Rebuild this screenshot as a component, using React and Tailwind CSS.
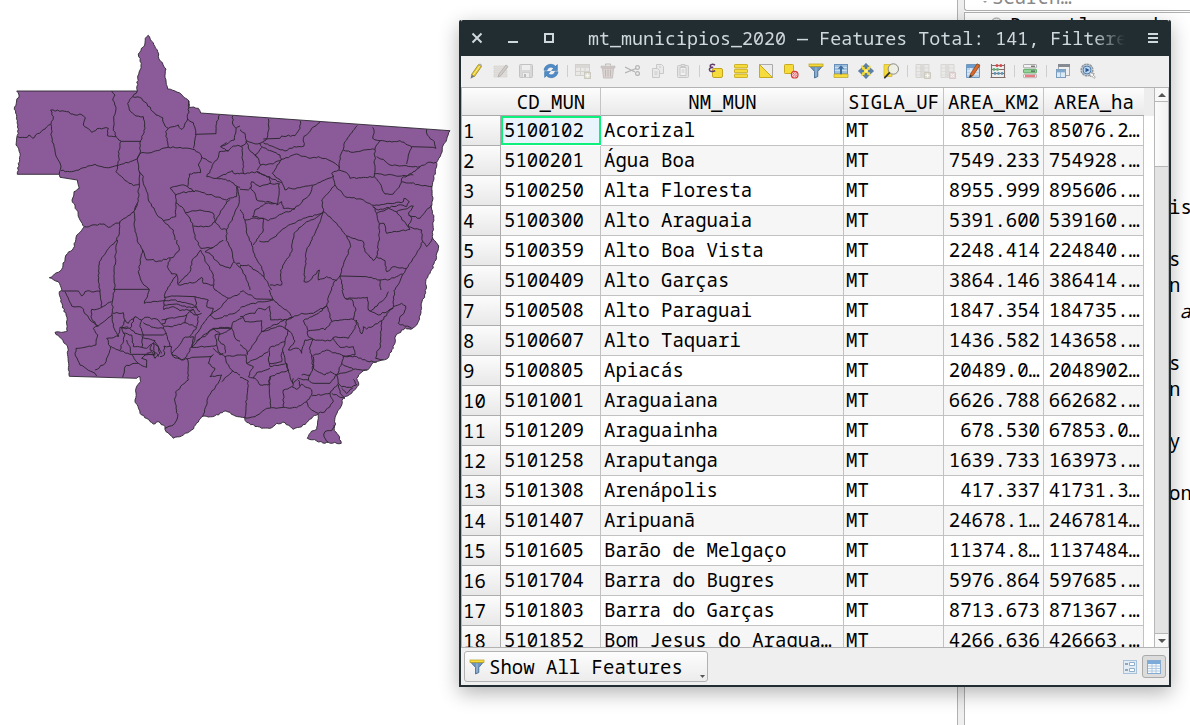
import React from "react";

const outline =
  "16.7,91 137.3,91 136.7,88.3 137.7,78.3 140,70 141.3,63.3 138.3,54 144.7,45 145.3,38.3 148.3,35.3 153.3,42.7 157.7,51.7 160.3,61 166,69 165,77.3 167.7,89 175,91 182.7,95.7 189,101 188.7,107.3 198.3,108.3 200.7,113 450,130.7 446.7,139.3 443.3,145 441,154 436.7,162.3 435.3,171.7 432,186.7 432.7,200 431.3,206.7 433.7,218.3 432.3,236.7 438.7,246 436,260 430,273.3 425.7,281.7 425.7,292.7 422,301.7 420.3,315 416.7,325 411,329.3 405,327.7 395.7,336 393.3,348.3 386.7,359 373.3,362.3 369.3,368.3 361.7,372.3 356.7,378.3 358.7,385 351.7,393.3 343.3,398.3 341.7,405 336,415 334.3,430.7 338.3,435 341.3,443.3 328.3,442.3 325,443.3 316.7,441 307.3,438.3 311.7,431 316.7,429.3 318,414 312.7,416.7 301.7,426.7 293.3,429.3 285,422.7 276.7,423.3 271.7,427.7 261.7,428.3 246.7,422.3 244.7,417.7 233.3,415 226,411 212.7,416.7 201.7,416.7 191.7,430 183.3,435 173.3,438.3 166,431.7 165,426.7 158.3,421.7 153.3,424 140,413.3 135,400 136,388.3 140.7,381.7 140,376.7 136.7,378.3 69.3,376.3 67.3,345.7 55,332.3 67.3,331 66,315 60.7,301.7 59.3,291.7 61.7,289.3 58.3,281.7 49.3,277.7 61.7,269.3 66,255 73.3,248.3 76,237.3 84.3,226.7 80,220 76.7,210 72,200 74,191.7 79.3,188.3 77.3,180 60,177.3 59.3,174.3 17.3,174.3 20,153.3 16,145 18.3,133.3 16.7,116.7 14.3,109.3 19,95 16.7,91";

// Inner boundaries, one sheet for each quarter of the state, three units to a pixel.
const sheets = [
  {
    id: "nw", x: 0, y: 20, clip: [0, 0, 720, 660],
    lines: [
      "335,213 345,225 338,240 348,262 341,290 340,325 348,350 363,363",
      "52,350 82,352 87,345 98,355 128,330 152,313",
      "152,270 160,290 153,313 155,350 162,380 170,412 183,440 178,463",
      "152,270 200,275 225,285 240,282 256,293 250,315 275,337 298,325 325,325 322,347 348,350",
      "363,364 422,364", "363,364 355,395 358,420 352,437",
      "183,452 215,455 285,433 320,443 352,437 410,418 420,400",
      "412,213 398,230 383,250 388,270 408,288 430,290 435,325 422,362 420,400 412,418 418,455 418,495 412,550 405,570",
      "398,230 425,235 468,285 488,293 495,318 505,325 497,335 505,382",
      "505,325 535,315 543,328 552,322 563,297 567,262 566,243", "563,297 580,308 587,340 580,385",
      "585,343 648,341 650,310 658,285",
      "420,400 460,395 505,382 540,382 578,388 600,400 605,412 635,428",
      "698,287 698,312 708,325 703,360 662,380 685,393 658,395 655,412 640,430",
      "708,325 720,318", "685,393 700,378 720,378", "662,380 680,368",
      "640,430 635,445 620,470 650,475 690,482 710,498 720,502",
      "650,475 697,452 705,462 720,462", "605,412 595,435 602,458 568,462 563,500",
      "352,437 348,455 370,475 400,497 418,492",
      "418,455 430,470 430,490 443,520 445,540 475,590 490,602 520,630 525,660",
      "510,505 545,495 563,500 585,515 545,518 527,525 510,505",
      "585,512 640,527 680,540 710,530 710,500", "527,525 527,590 490,602",
      "527,548 545,560 557,580 578,610 588,660", "557,578 600,570 640,580 645,605 625,620 580,618",
      "645,605 660,580 680,545 690,538", "645,605 665,628 680,628",
      "710,500 718,530 718,545 705,575 697,600 680,628 680,660",
      "253,620 312,612 325,622 360,605 402,575 412,550", "360,605 358,635 350,660",
      "402,575 405,600 403,620 412,660",
    ],
  },
  {
    id: "ne", x: 220, y: 90, clip: [60, 0, 660, 600],
    lines: [
      "38,75 38,100 75,130 78,160 65,168", "45,112 40,140 0,170", "0,185 15,178 35,185 65,168",
      "65,168 68,210 70,250", "145,87 147,115 138,150 120,160 100,160 80,152",
      "130,147 180,145 185,138 225,137 240,115 241,93",
      "300,97 275,115 250,145 252,168 222,170 195,183 160,170 130,158",
      "78,155 92,185 115,205 122,225 112,240", "120,160 125,170 180,195 185,208 160,222 122,225",
      "125,172 105,195 112,203",
      "185,208 157,250 185,275 195,300 205,293 225,297 278,285",
      "185,208 230,192 270,205 295,200 330,212 358,230 357,240 335,250 340,258 280,285 270,312 225,355 190,355",
      "412,107 375,155 370,178 360,200 358,235", "370,180 400,187 430,180 465,178 470,165 480,152",
      "458,112 462,130 458,145 480,152 530,155 540,152 575,170 565,195 560,222",
      "575,170 640,172 648,175 643,155 622,135 620,118", "465,178 463,260",
      "470,200 490,208 510,225 600,230",
      "648,217 625,217 600,230 575,250 545,265 540,285 520,312 495,312 475,275 463,260 430,262 390,265 380,248 357,240",
      "463,252 500,255 545,258 580,255", "545,275 636,290",
      "340,258 345,285 375,320 430,330 455,345 470,345 550,335 552,325 568,335 560,350 535,345 475,360 458,350",
      "345,285 305,330 310,365 350,400 380,438 430,455 435,485 460,512 470,500 478,450 478,400 470,370 460,350",
      "470,370 505,355 530,365 560,405 570,418 530,425 500,430 492,400 478,402",
      "530,365 550,358 580,348 565,372 575,385 565,410 605,420", "565,375 600,385 634,345",
      "605,420 608,455 620,470 637,445", "608,455 590,490 560,535 525,600",
      "470,500 495,512 500,545 520,530 560,535", "380,438 392,470 375,510 360,558 340,580 335,600",
      "360,558 440,560 480,570 510,568 548,552", "480,570 483,600",
      "310,365 285,430 260,480 252,575 265,575 298,540 295,570 320,560 350,572",
      "360,558 370,600",
      "310,365 290,382 260,395 222,430 215,485 182,540 185,585 150,585",
      "310,368 250,385 200,410 145,455 118,453",
      "225,357 185,372 145,392 130,385 98,380 105,360 140,340 165,340",
      "0,270 45,290 50,300 45,320 0,328",
      "0,260 35,245 75,252 110,245 150,262 150,280 120,290 95,275 92,295 105,310 110,330 170,340",
      "110,245 185,278", "178,280 174,330 170,345 185,335 190,355", "50,295 85,300 92,290", "150,280 178,282",
      "45,320 55,345 75,390 95,385 130,385 130,420 100,465",
      "75,390 80,430 95,465 105,500 125,530 132,560 105,540 85,525 60,525 40,515",
      "55,340 40,350 20,430 40,490 40,515 22,535 0,520", "60,525 85,580 90,600", "132,560 155,600",
    ],
  },
  {
    id: "sw", x: 30, y: 220, clip: [0, 60, 630, 630],
    lines: [
      "270,0 262,60 258,90 253,160 255,200 248,240 247,290",
      "262,60 240,80 208,125 205,180 210,215 215,262 245,245",
      "95,213 145,213 155,228 165,215 205,213 210,215",
      "105,215 125,258 155,262 180,300 205,318 240,290 247,285", "215,262 200,268 185,268 183,290 200,318",
      "312,0 325,70 338,90 350,120 370,118 380,125 430,112 448,90 440,65 437,35 400,0",
      "338,90 325,155 338,190 358,210", "250,208 358,208", "358,210 343,250 402,242",
      "420,115 412,140 425,162 440,163 405,220 402,270",
      "440,163 445,195 500,185 515,172 520,190 550,195 555,210 595,235 660,210 690,240",
      "445,190 480,155 485,125 512,90 530,130 550,165 552,195",
      "490,0 495,50 512,85 550,82 585,55 605,90 612,125 600,145 570,135 540,100 525,95 550,82",
      "490,15 530,20 550,10 585,28 590,55", "605,0 588,30", "612,125 640,150 655,200 660,210",
      "620,130 660,140 690,160", "645,0 655,50 665,80 690,60",
      "402,232 440,228 495,230 500,262 470,262 440,252 402,255",
      "402,268 430,260 450,272 490,268 500,285 515,280", "402,242 430,240 490,255 510,275",
      "495,230 535,240 530,260 550,265 540,285 500,340 485,382",
      "595,235 570,265 540,285 555,297 605,282 690,242",
      "248,280 280,278 285,300 275,325 300,325 315,290 335,300 345,292 385,300 400,318",
      "315,290 295,310 285,300", "340,308 370,322 400,325",
      "335,300 330,320 340,345 400,345 410,340", "247,290 250,320 265,350 270,322 295,322",
      "205,318 190,325 203,345 198,375 138,385 135,400 150,435 195,460 200,468",
      "195,450 225,430 242,385 230,355 265,348", "242,378 265,390 300,403 370,403",
      "275,325 285,345 270,390", "280,340 305,345 310,380 335,382 340,345", "300,325 315,340 340,345",
      "290,360 300,380 302,400", "335,382 350,385 375,362 335,350",
      "350,420 335,415 345,405 375,405 370,370 385,380 390,400 375,415 365,395 350,400",
      "350,420 350,442 325,430 305,405", "278,472 285,440 315,430 325,430",
      "365,375 360,390 380,400 385,410", "375,365 385,380 395,400", "400,320 412,350 420,380",
      "390,410 403,405 402,378 425,380 424,398 430,410",
      "400,318 420,320 465,308 500,322 480,350 460,355 440,385 425,400 455,420 470,410 485,380",
      "395,300 440,292 470,285 490,268", "410,295 405,310 395,312", "470,285 465,308", "480,275 505,290 500,320",
      "430,410 460,420 485,412 540,410 550,403", "480,352 490,350 485,382",
      "485,382 530,380 560,375 565,395 585,410 650,405 690,400", "550,385 570,405 580,400",
      "470,415 475,430 475,480 437,515 435,545 443,590 430,615 405,625",
      "545,408 535,430 555,445 540,470 575,465 565,490 535,530 530,555 518,590",
      "585,410 590,430 608,452 655,482 645,595", "608,452 575,485",
      "485,382 520,345 550,325 605,325 590,335 555,345 560,375",
      "550,325 570,340 565,360 585,380 585,400", "605,325 610,305 650,290",
      "500,362 530,345 545,330 570,322 605,325",
      "605,325 612,345 620,360 650,375 640,395",
    ],
  },
  {
    id: "se", x: 230, y: 260, clip: [30, 90, 660, 480],
    lines: [
      "0,115 40,92 80,117 130,118 135,125 180,160 188,172", "115,75 128,118",
      "0,165 35,140 70,130 130,120", "120,140 122,180 165,178 188,172 215,160 250,160 290,138 305,185",
      "0,185 60,160 75,160 85,145 105,150 120,138", "165,178 95,215 95,182 45,185 40,172 5,190",
      "0,200 15,240 50,270 52,285", "95,215 150,198 175,210 165,245 120,262 115,300",
      "95,215 80,240 50,280", "290,138 300,100 325,60 345,115 365,118 378,150 370,178 330,180 305,185",
      "345,115 412,112 415,150 445,165 490,145", "475,95 465,115 425,150 420,155",
      "492,90 490,140 455,182 450,265 440,275 437,295 460,300", "490,140 515,130 527,138 522,160 510,170 505,190 545,205",
      "370,178 380,185 390,215 395,222 400,200 410,207 455,182",
      "380,180 375,205 355,235 310,232 300,243 250,238 235,230 232,213",
      "290,138 270,155 220,182 235,213 280,205 285,210 305,185",
      "188,172 170,180 165,205 180,215 195,243 175,270 205,265 215,280 225,240 250,238",
      "310,235 330,262 370,260 375,285 340,288",
      "250,238 238,265 245,290 290,270 340,288 335,310 320,345 300,335 285,345 275,340 250,325 250,290",
      "340,288 380,290 410,303 440,307", "335,310 345,318 370,328 410,330",
      "115,300 118,310 155,305 155,280 165,245", "0,285 48,285 50,310 90,290 115,275",
      "50,310 70,320 55,350 75,355 90,375 115,375 120,350 175,330 170,310 120,320 118,310",
      "70,355 80,338 120,325", "120,350 118,400 122,443", "175,330 180,350 190,370 205,355 235,360",
      "160,275 165,300 175,330", "245,290 248,330 240,345 215,345", "0,335 55,363 44,473",
      "44,473 75,470 110,445 160,442 200,443 230,425",
      "160,442 160,390 185,380 200,388 215,372 245,390 245,405 230,425 240,445 265,460 285,455 310,425 300,400 245,408",
      "190,355 188,380", "205,360 210,378", "240,345 235,360 250,370 300,370 320,345 325,370 300,400",
      "320,345 370,328", "325,370 335,380 365,382 380,375 370,358", "305,400 345,415", "325,375 330,400 345,415",
      "335,385 350,400 368,385", "313,495 305,512 285,515 282,530 295,547",
    ],
  },
];

// Gives hand-plotted boundaries a river-like edge; long straight segments stay straight.
function rough(points, amount, step) {
  const p = points.split(" ").map((s) => s.split(",").map(Number));
  const out = [p[0]];
  let seed = Math.round(p[0][0] * 13 + p[0][1] * 7) + 11;
  for (let i = 1; i < p.length; i++) {
    const [ax, ay] = p[i - 1];
    const [bx, by] = p[i];
    const len = Math.hypot(bx - ax, by - ay);
    const n = Math.round(len / step);
    const flat = Math.abs(by - ay) < 3 && len > step * 7;
    if (!flat && len < step * 20) {
      for (let k = 1; k < n; k++) {
        seed = (seed * 1103515245 + 12345) % 2147483648;
        const d = (seed / 2147483648 - 0.5) * 2 * amount;
        const t = k / n;
        out.push([ax + (bx - ax) * t - ((by - ay) / len) * d, ay + (by - ay) * t + ((bx - ax) / len) * d]);
      }
    }
    out.push([bx, by]);
  }
  return out.map(([x, y]) => x.toFixed(1) + "," + y.toFixed(1)).join(" ");
}

function StateMap() {
  return (
    <svg width="456" height="725" viewBox="0 0 456 725" className="block shrink-0">
      <polygon points={rough(outline, 0.8, 2.2)} fill="#8b5a98" stroke="#2d2731" strokeWidth="0.9" />
      {sheets.map((s) => (
        <g key={s.id} transform={`translate(${s.x} ${s.y}) scale(0.33333)`}>
          <clipPath id={s.id}>
            <rect x={s.clip[0]} y={s.clip[1]} width={s.clip[2]} height={s.clip[3]} />
          </clipPath>
          <g clipPath={`url(#${s.id})`} fill="none" stroke="#2d2731" strokeWidth="2.9" strokeLinejoin="round">
            {s.lines.map((l, i) => (
              <polyline key={i} points={rough(l, 2.2, 7)} />
            ))}
          </g>
        </g>
      ))}
    </svg>
  );
}

const icons = {
  pencil: (
    <g>
      <path d="M3.5 11.5 10.5 1.5l3 2-7 10z" fill="#e6c92c" stroke="#8d7a1d" strokeWidth=".7" />
      <path d="M5 12.3 12 2.6" stroke="#fbf0a0" strokeWidth="1" />
      <path d="m3.5 11.5-1 4.2 4-2.2z" fill="#777" />
      <path d="m10.5 1.5 3 2 .5-1.6-2-1.3z" fill="#aaa" />
    </g>
  ),
  multiEdit: (
    <g opacity=".55">
      <path d="M1 3h13v3H1zM1 7h13v3H1zM1 11h13v3H1z" fill="#d6d3cc" stroke="#b8b5ae" strokeWidth=".6" />
      <path d="m5 14 1-3 7-9 2 1.5-7 9z" fill="#b7afa8" stroke="#77716b" strokeWidth=".7" />
    </g>
  ),
  save: (
    <g opacity=".6">
      <rect x="1.5" y="1.5" width="13" height="13" rx="1" fill="#c9c9c9" stroke="#a5a5a5" />
      <path d="M4 2h8v5H4z" fill="#eee" />
      <path d="M4.500 9.500h7v5h-7z" fill="#ececec" stroke="#aaa" strokeWidth=".6" />
      <path d="M6 11h2v3H6z" fill="#999" />
    </g>
  ),
  reload: (
    <g fill="#4f8cc7" stroke="#2c66a5" strokeWidth=".5">
      <path d="M1 7.300C1.300 3.500 4.500 1.200 8 1.300c2 .1 3.400.8 4.500 2l1.900-1.700v5.900H8.600l1.900-2C9.700 4.600 8.700 4 7.500 4.200 5.600 4.300 4.500 5.500 4.100 7.300z" />
      <path d="M15 8.700c-.3 3.800-3.500 6.100-7 6-2-.1-3.400-.8-4.500-2l-1.900 1.700V8.500h5.800l-1.900 2c.8.900 1.800 1.500 3 1.300 1.900-.1 3-1.300 3.400-3.100z" />
    </g>
  ),
  addRow: (
    <g opacity=".5">
      <rect x=".5" y="1.500" width="14" height="11" fill="#e6e4e0" stroke="#b5b2ad" />
      <path d="M1 2h13v3H1z" fill="#c5c3c0" />
      <path d="M1 8.500h13M5.500 5v7.500M10 5v7.500" stroke="#bbb8b3" />
      <rect x="9.500" y="9.500" width="6" height="6" fill="#d0ccb0" stroke="#a9a693" />
      <path d="M12.500 10.500v4M10.500 12.500h4" stroke="#fff" strokeWidth="1.300" />
    </g>
  ),
  trash: (
    <g opacity=".6">
      <path d="M2.500 5h11l-1 10h-9z" fill="#cfc1be" stroke="#a9a09e" />
      <path d="M1 3h14v2H1z" fill="#bfb1ae" stroke="#a19997" strokeWidth=".6" />
      <path d="M5.500 2.500V1h5v1.500M5.500 6.500v7M8 6.500v7M10.500 6.500v7" stroke="#9e9492" fill="none" />
    </g>
  ),
  cut: (
    <g stroke="#b4b4b4" fill="none" strokeWidth="1.200">
      <path d="m0 4 10 5M0 10l11-4.500" />
      <circle cx="12.500" cy="4.500" r="1.900" />
      <circle cx="12.500" cy="10.500" r="1.900" />
    </g>
  ),
  copy: (
    <g fill="#e9e9e9" stroke="#c8c8c8">
      <path d="M6.500 1.500h5l2 2v7h-7z" />
      <path d="M2.500 5.500h5l2 2v7h-7zM4.500 9h3M4.500 11h3M9 4h2" />
    </g>
  ),
  paste: (
    <g fill="#e3e3e3" stroke="#c8c8c8">
      <rect x="2.500" y="2.500" width="11" height="12" rx="1" />
      <path d="M5 4.500h6v8H5z" fill="#f1f1f1" />
      <path d="M6 1.500h4v2H6zM6.500 7h3M6.500 9h3" />
    </g>
  ),
  selectExpr: (
    <g>
      <rect x="4.500" y="5.500" width="10" height="9" rx="1.500" fill="#f5dc3c" stroke="#c3a61d" />
      <path d="M7 2.200C5 .8 2 1.200 2.200 3c.1 1 1.200 1.500 3 1.400C3 4.400 1.300 5 1.400 6.700c.2 2.100 3.600 2.300 5.800.9" fill="none" stroke="#5f3968" strokeWidth="1.500" />
    </g>
  ),
  selectAll: (
    <g fill="#f5dc3c" stroke="#c8aa1f" strokeWidth=".9">
      <rect x="1.500" y="1.500" width="13" height="3.400" rx=".6" />
      <rect x="1.500" y="6.300" width="13" height="3.400" rx=".6" />
      <rect x="1.500" y="11.100" width="13" height="3.400" rx=".6" />
    </g>
  ),
  invert: (
    <g>
      <path d="M1.500 1.500h13v13z" fill="#ececec" stroke="#aaa" />
      <path d="M1.500 1.500v13h13z" fill="#f5dc3c" stroke="#c8aa1f" />
    </g>
  ),
  deselect: (
    <g>
      <rect x="1.500" y="1.500" width="9" height="9" rx=".8" fill="#f5dc3c" stroke="#c8aa1f" />
      <circle cx="11.700" cy="11.700" r="3.300" fill="#fbdcdc" stroke="#d33c3f" strokeWidth="1.200" />
      <path d="m9.500 13.800 4.400-4.300M9.500 11.500l2.200-2M11.700 13.800l2.300-2" stroke="#d33c3f" strokeWidth=".8" />
    </g>
  ),
  filter: (
    <g>
      <path d="M1.500 3h13L9.800 8.500v5L6.500 15V8.500z" fill="#6d95bd" stroke="#40678f" strokeWidth=".8" />
      <path d="M8 4.500v9" stroke="#a9c5de" />
      <rect x="1" y="1" width="14" height="2.400" fill="#f5dc3c" stroke="#b79c1c" strokeWidth=".7" />
    </g>
  ),
  moveTop: (
    <g>
      <rect x="1.500" y="1.500" width="13" height="9.500" fill="#9dbfdf" stroke="#688fb7" />
      <path d="M2 4.500h12M2 7.500h12" stroke="#d7e6f4" strokeWidth=".8" />
      <path d="M1 11h14v3.500H1z" fill="#f5dc3c" stroke="#b7a02a" strokeWidth=".7" />
      <path d="M8 2.200 4.800 5.700H7v5.500h2V5.700h2.200z" fill="#3d6c9c" />
    </g>
  ),
  pan: (
    <g>
      <path d="M3 2.500h9.500v10.500H3z" fill="#f5dc3c" />
      <path d="M8 .3 5 3.600h2V5.500h2V3.600h2zM8 15.700l3-3.300H9v-1.900H7v1.900H5zM.3 8l3.300 3V9h1.900V7H3.600V5zM15.700 8l-3.300-3v2h-1.900v2h1.900v2z" fill="#5a82ae" stroke="#3d638e" strokeWidth=".5" />
      <circle cx="8" cy="8" r="1.500" fill="#fff3a0" />
    </g>
  ),
  zoomTo: (
    <g>
      <path d="M1 1.500h8v12H1z" fill="#f5dc3c" stroke="#cdb22d" strokeWidth=".7" />
      <circle cx="10.300" cy="6" r="5.200" fill="#eef0e6" fillOpacity=".93" stroke="#8b8b80" strokeWidth="1" />
      <path d="M6.300 9.900 1.800 14.700" stroke="#333" strokeWidth="1.800" strokeLinecap="round" />
    </g>
  ),
  newField: (
    <g opacity=".5">
      <path d="M1 1.500h13v13H1z" fill="#e5e3df" stroke="#bcb9b4" />
      <path d="M5 1.500h4.500v13H5z" fill="#c9c6c1" />
      <path d="M1 5h13M1 8.500h13M1 12h13" stroke="#bbb" strokeWidth=".7" />
      <path d="M9.500 9.500h6v6h-6z" fill="#cfcbb3" stroke="#aaa58e" />
      <path d="M12.500 10.500v4M10.500 12.500h4" stroke="#fff" />
    </g>
  ),
  delField: (
    <g opacity=".45">
      <path d="M1 1.500h13v13H1z" fill="#e5e3df" stroke="#bcb9b4" />
      <path d="M5 1.500h4.500v13H5z" fill="#c9c6c1" />
      <path d="M1 5h13M1 8.500h13M1 12h13" stroke="#bbb" strokeWidth=".7" />
      <path d="M9.500 9.500h6v6h-6z" fill="#dcc2c2" stroke="#b79c9c" />
      <path d="m11 11 3 3m0-3-3 3" stroke="#fff" />
    </g>
  ),
  editFields: (
    <g>
      <path d="M1.500 1.500h13v13h-13z" fill="#b8d0e8" stroke="#7297bd" />
      <path d="M2 2h12v3H2z" fill="#6b9ccc" />
      <path d="M2 8h12M2 11h12M6 5v9" stroke="#fff" strokeWidth=".8" />
      <path d="m4.500 14.500 1-3.700L12 .8l2.800 1.700-6.700 10z" fill="#d9682c" stroke="#85390f" strokeWidth=".7" />
      <path d="m4.500 14.500.7-2.800 1.900 1.300z" fill="#333" />
    </g>
  ),
  abacus: (
    <g>
      <path d="M1.500 1v13.500M14.500 1v13.500M.5 14.500h15M1 2.500h14M1 6.500h14M1 10.500h14" stroke="#806c68" strokeWidth="1.100" fill="none" />
      <g fill="#d8464a"><circle cx="7" cy="2.600" r="1.500" /><circle cx="10.800" cy="2.600" r="1.500" /></g>
      <g fill="#65ad79"><circle cx="4" cy="6.500" r="1.400" /><circle cx="7.500" cy="6.500" r="1.400" /></g>
      <g fill="#5d95b5"><circle cx="5" cy="10.500" r="1.400" /><circle cx="8.500" cy="10.500" r="1.400" /><circle cx="12" cy="10.500" r="1.400" /></g>
    </g>
  ),
  conditional: (
    <g>
      <rect x="1.500" y="1.500" width="13" height="3.300" rx=".7" fill="#f2f2f2" stroke="#999" strokeWidth=".8" />
      <rect x="1.500" y="6.300" width="13" height="3.600" rx=".7" fill="#93d397" stroke="#4e9f55" strokeWidth=".8" />
      <rect x="1.500" y="11.400" width="13" height="3.300" rx=".7" fill="#fbeeee" stroke="#b0a0a0" strokeWidth=".8" />
      <path d="M9 3.200h4M9 8.100h4" stroke="#454545" />
      <path d="M3 13h10" stroke="#dc3038" strokeWidth="1.200" />
    </g>
  ),
  dock: (
    <g>
      <rect x="3.500" y="1.500" width="11" height="11" fill="#efefef" stroke="#a8a8a8" />
      <path d="M3 1h12v3H3z" fill="#858b90" />
      <rect x="1.500" y="6.500" width="9" height="8" fill="#dce9f5" stroke="#789cbe" />
      <path d="M2 7h8v2H2zM5.500 9v5.500" fill="#76a2ca" stroke="#8caecb" strokeWidth=".8" />
    </g>
  ),
  actions: (
    <g>
      <circle cx="7" cy="7" r="5.700" fill="#dfe4ea" stroke="#9299a2" strokeWidth="1.800" strokeDasharray="2.400 .5" />
      <circle cx="7" cy="7" r="4" fill="#bcd4ec" stroke="#4b7db0" />
      <path d="m5.500 4.800 4 2.200-4 2.200z" fill="#24588e" />
      <path d="m9.500 9.500 1 4.500 1.200-1.200 2.300 2.600 1.300-1.200-2.400-2.400 1.500-1z" fill="#fff" stroke="#777" strokeWidth=".6" />
    </g>
  ),
};

function Icon({ name }) {
  return (
    <svg width="16" height="16" viewBox="0 0 16 16" className="block shrink-0">
      {icons[name]}
    </svg>
  );
}

const toolbar = [
  "pencil", "multiEdit", "save", "reload", "|",
  "addRow", "trash", "cut", "copy", "paste", "|",
  "selectExpr", "selectAll", "invert", "deselect", "filter", "moveTop", "pan", "zoomTo", "|",
  "newField", "delField", "editFields", "abacus", "|",
  "conditional", "|",
  "dock", "actions",
];

const rows = [
  ["5100102", "Acorizal", "850.763", "85076.2…"],
  ["5100201", "Água Boa", "7549.233", "754928.…"],
  ["5100250", "Alta Floresta", "8955.999", "895606.…"],
  ["5100300", "Alto Araguaia", "5391.600", "539160.…"],
  ["5100359", "Alto Boa Vista", "2248.414", "224840.…"],
  ["5100409", "Alto Garças", "3864.146", "386414.…"],
  ["5100508", "Alto Paraguai", "1847.354", "184735.…"],
  ["5100607", "Alto Taquari", "1436.582", "143658.…"],
  ["5100805", "Apiacás", "20489.0…", "2048902…"],
  ["5101001", "Araguaiana", "6626.788", "662682.…"],
  ["5101209", "Araguainha", "678.530", "67853.0…"],
  ["5101258", "Araputanga", "1639.733", "163973.…"],
  ["5101308", "Arenápolis", "417.337", "41731.3…"],
  ["5101407", "Aripuanã", "24678.1…", "2467814…"],
  ["5101605", "Barão de Melgaço", "11374.8…", "1137484…"],
  ["5101704", "Barra do Bugres", "5976.864", "597685.…"],
  ["5101803", "Barra do Garças", "8713.673", "871367.…"],
  ["5101852", "Bom Jesus do Aragua…", "4266.636", "426663.…"],
];

const grid = "grid grid-cols-[39px_100px_243px_100px_100px_100px]";
const cell = "flex items-center border-r border-b border-[#c2c2c2] overflow-hidden";

function Table() {
  return (
    <div className="flex h-[561px] border-t border-b border-l border-[#b3b3b3] bg-white">
      <div className="w-[692px] overflow-hidden">
        <div className="flex h-[28px]">
          <div className={grid + " h-[28px] w-[682px] border-b border-[#a9a9a9] bg-linear-to-b from-[#fdfdfd] to-[#e9e9e9] text-center leading-[28px]"}>
            <div />
            <div className="border-r border-[#c4c4c4] pl-px">CD_MUN</div>
            <div className="border-r border-[#c4c4c4] pl-px">NM_MUN</div>
            <div className="border-r border-[#c4c4c4]">SIGLA_UF</div>
            <div className="border-r border-[#c4c4c4]">AREA_KM2</div>
            <div>AREA_ha</div>
          </div>
          <div className="grow bg-[#ededed]" />
        </div>
        {rows.map(([code, name, km, ha], i) => (
          <div key={code} className={grid + " h-[30px] w-[682px] " + (i % 2 ? "bg-[#f6f6f6]" : "bg-white")}>
            <div className="flex items-center overflow-hidden border-r border-b border-[#acacac] bg-linear-to-b from-[#fcfcfc] to-[#e8e8e8] pt-[2px] pl-px">
              {i + 1}
            </div>
            {i === 0 ? (
              <div className="mb-px flex items-center border-2 border-[#0ef07c] bg-[#e9f4fd] pl-px">{code}</div>
            ) : (
              <div className={cell + " pl-[3px]"}>{code}</div>
            )}
            <div className={cell + " pl-[3px]"}>{name}</div>
            <div className={cell + " pl-[2px]"}>MT</div>
            <div className={cell + " justify-end pr-[3px]"}>{km}</div>
            <div className={cell + " justify-end pr-[3px]"}>{ha}</div>
          </div>
        ))}
      </div>
      <div className="flex w-[15px] flex-col border-r border-l border-[#b7b7b7] bg-[#e3e3e3]">
        <div className="flex h-[14px] items-center justify-center border-b border-[#b7b7b7] bg-[#f8f8f8]">
          <svg width="8" height="4" viewBox="0 0 8 4"><path d="M0 4 4 0l4 4z" fill="#555" /></svg>
        </div>
        <div className="h-[65px] border-b border-[#b7b7b7] bg-linear-to-r from-[#fbfbfb] to-[#f1f1f1]" />
        <div className="grow" />
        <div className="flex h-[14px] items-center justify-center border-t border-[#b7b7b7] bg-[#f8f8f8]">
          <svg width="8" height="4" viewBox="0 0 8 4"><path d="m0 0 4 4 4-4z" fill="#555" /></svg>
        </div>
      </div>
    </div>
  );
}

function Window() {
  return (
    <div className="absolute top-[20px] left-[459px] flex h-[667px] w-[712px] flex-col rounded-t-[2px] border-2 border-t-0 border-[#222d32] bg-[#efefef] shadow-[0_6px_20px_rgba(0,0,0,0.3)]">
      <div className="flex h-[36px] shrink-0 items-center rounded-t-[2px] bg-[#222d32] text-[#cfd8dc]">
        <svg width="110" height="36" viewBox="0 0 110 36" className="block shrink-0" fill="none" stroke="#cfd8dc" strokeWidth="2">
          <path d="m11.500 13.500 9 9m0-9-9 9M47 22h10" />
          <path d="M84 14h8v8h-8z" />
        </svg>
        <div className="ml-[17px] w-[540px] overflow-hidden text-[18.350px] leading-[30px] whitespace-pre mask-r-from-[505px] mask-r-to-[537px]">
          mt_municipios_2020 — Features Total: 141, Filtered
        </div>
        <svg width="12" height="12" viewBox="0 0 12 12" className="ml-[19px] block shrink-0" stroke="#cfd8dc" strokeWidth="2">
          <path d="M1 2h10M1 6h10M1 10h10" />
        </svg>
      </div>
      <div className="flex h-[31px] shrink-0 items-center gap-[9px] pb-[2px] pl-[7px]">
        {toolbar.map((t, i) =>
          t === "|" ? (
            <div key={i} className="-mr-[1.700px] -ml-[1px] h-[12px] w-[1px] shrink-0 bg-[#cecece]" />
          ) : (
            <Icon key={i} name={t} />
          )
        )}
      </div>
      <Table />
      <div className="flex grow items-center justify-between pr-[3px] pl-[3px]">
        <div className="flex h-[31px] w-[244px] items-center rounded-[3px] border border-[#b2b2b2] bg-linear-to-b from-[#fdfdfd] to-[#ececec] pl-[4px]">
          <Icon name="filter" />
          <span className="ml-[4px] pt-[2px]">Show All Features</span>
          <svg width="5" height="3" viewBox="0 0 5 3" className="mt-[20px] ml-auto mr-[2px]"><path d="m0 0 2.500 3L5 0z" fill="#555" /></svg>
        </div>
        <div className="flex items-center gap-[5px]">
          <svg width="14" height="14" viewBox="0 0 14 14" fill="none">
            <rect x=".5" y=".5" width="13" height="13" fill="#e2ecf5" stroke="#a9c1d9" />
            <path d="M6.500 2.500h5v3h-5zM6.500 8.500h5v3h-5z" fill="#fff" stroke="#8faecd" />
            <path d="M2 4h3M2 10h3" stroke="#41617f" />
          </svg>
          <div className="flex h-[23px] w-[24px] items-center justify-center rounded-[3px] border border-[#aaa] bg-[#dcdcdc]">
            <svg width="14" height="14" viewBox="0 0 14 14">
              <rect x=".5" y=".5" width="13" height="13" fill="#f7fafd" stroke="#87abd0" />
              <path d="M1 1h12v3H1z" fill="#7cabd9" />
              <path d="M1 6h12M1 8.500h12M1 11h12M5 4v9M9 4v9" stroke="#a9c4df" strokeWidth=".9" />
            </svg>
          </div>
        </div>
      </div>
    </div>
  );
}

const panelText = ["is", "", "s", "n", " a", "", "s", "n", "", "y", "", "on"];

function SidePanel() {
  return (
    <div className="flex grow flex-col">
      <div className="flex h-[11px] items-end overflow-hidden rounded-b-[3px] border-b border-l border-[#b1b1b1] pl-[17px] text-[#888]">
        <svg width="6" height="9" viewBox="0 0 6 9"><path d="M1 0h4L3 2z" fill="#999" /></svg>
        <span className="ml-[4px] leading-[26px]">Search…</span>
      </div>
      <div className="mt-px grow border-t border-l border-[#b1b1b1]">
        <div className="flex h-[24px] items-center pl-[25px] leading-[24px]">
          <svg width="13" height="13" viewBox="0 0 13 13" className="mr-[7px] mb-[3px]" fill="#eee" stroke="#999"><circle cx="6.500" cy="6.500" r="5.500" /><path d="M6.500 3v4h3" /></svg>
          Recently used
        </div>
        <div className="mt-[157px] pl-[205px] text-[19px] leading-[26px] whitespace-pre">
          {panelText.map((t, i) => (
            <div key={i} className={"h-[26px] " + (t === " a" ? "-ml-[2px] italic" : "-ml-px")}>{t}</div>
          ))}
        </div>
      </div>
    </div>
  );
}

export default function App() {
  return (
    <div className="relative flex h-[725px] w-[1190px] overflow-hidden bg-white font-['Noto_Sans_Mono','DejaVu_Sans_Mono',monospace] text-[19px] leading-none text-black">
      <div className="w-[957px] shrink-0">
        <StateMap />
      </div>
      <div className="w-[7px] shrink-0 border-l border-[#b1b1b1] bg-[#efefef]" />
      <SidePanel />
      <Window />
    </div>
  );
}
